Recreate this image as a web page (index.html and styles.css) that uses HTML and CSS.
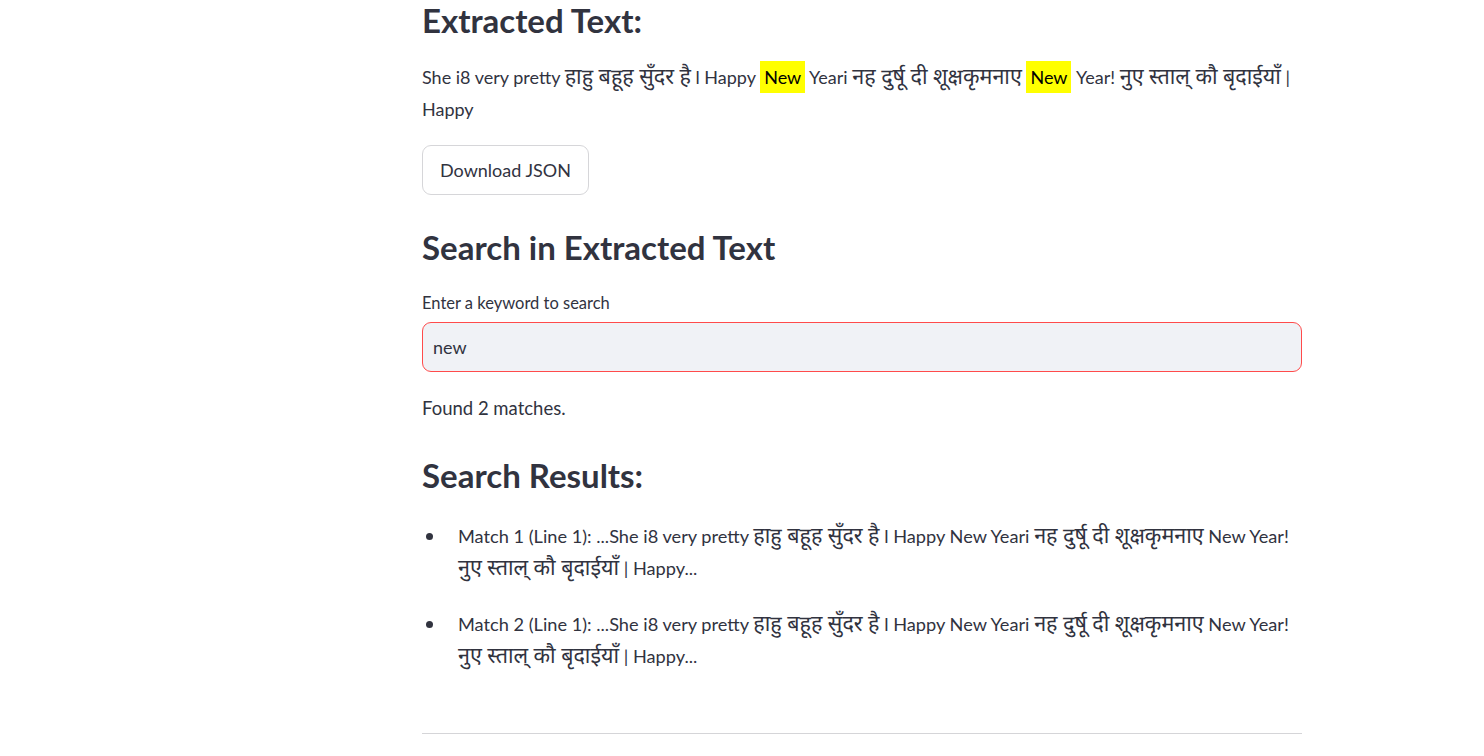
FILE: index.html
```html
<!DOCTYPE html>
<html lang="en">
<head>
<meta charset="utf-8">
<title>Extracted Text</title>
<link rel="stylesheet" href="styles.css">
</head>
<body>
<main class="main">
  <h3 class="heading heading-first">Extracted Text:</h3>
  <p class="extracted">She i8 very pretty <span class="dev">हाहु बहूह सुँदर है</span> l Happy <mark class="hl">New</mark> Yeari <span class="dev">नह दुर्षू दी शूक्षकृमनाए</span> <mark class="hl">New</mark> Year! <span class="dev">नुए स्ताल् कौ बृदाईयाँ</span> | <span class="word">Happy</span></p>
  <button class="btn" type="button">Download JSON</button>

  <h3 class="heading heading-search">Search in Extracted Text</h3>
  <label class="label" for="kw">Enter a keyword to search</label>
  <input class="input" id="kw" type="text" value="new">
  <p class="found">Found 2 matches.</p>

  <h3 class="heading heading-results">Search Results:</h3>
  <ul class="results">
    <li class="result">Match 1 (Line 1): ...She i8 very pretty <span class="dev">हाहु बहूह सुँदर है</span> l Happy New Yeari <span class="dev">नह दुर्षू दी शूक्षकृमनाए</span> New Year! <span class="dev">नुए स्ताल् कौ बृदाईयाँ</span> | Happy...</li>
    <li class="result">Match 2 (Line 1): ...She i8 very pretty <span class="dev">हाहु बहूह सुँदर है</span> l Happy New Yeari <span class="dev">नह दुर्षू दी शूक्षकृमनाए</span> New Year! <span class="dev">नुए स्ताल् कौ बृदाईयाँ</span> | Happy...</li>
  </ul>
  <hr class="rule">
</main>
</body>
</html>
```
FILE: styles.css
```css
html, body {
  margin: 0;
  padding: 0;
  background: #ffffff;
}

body {
  font-family: "Lato", "Noto Sans Devanagari", "Lohit Devanagari", "FreeSans", sans-serif;
  color: #31333f;
  font-size: 18px;
}

.main {
  width: 880px;
  margin-left: 422px;
  display: flex;
  flex-direction: column;
  align-items: flex-start;
}

.heading {
  margin: 0;
  font-size: 33px;
  font-weight: 700;
  line-height: 40px;
  color: #31333f;
}

.heading-search { margin-top: 32px; }
.heading-results { margin-top: 31px; }

.dev {
  font-size: 21.5px;
  line-height: 24px;
  vertical-align: baseline;
}

.extracted {
  margin: 21px 0 0;
  line-height: 32px;
  font-size: 18px;
}

.hl {
  background: #ffff00;
  color: #000000;
  padding: 0 4px;
  line-height: 32px;
  display: inline-block;
}

.btn {
  margin-top: 20px;
  height: 50px;
  padding: 0 17px;
  border: 1px solid #d6d6d9;
  border-radius: 9px;
  background: #ffffff;
  color: #31333f;
  font-family: inherit;
  font-size: 18px;
}

.label {
  margin-top: 26px;
  font-size: 16.5px;
  line-height: 20px;
}

.input {
  margin-top: 9px;
  width: 880px;
  height: 50px;
  box-sizing: border-box;
  padding: 0 10px;
  border: 1px solid #ff4b4b;
  border-radius: 9px;
  background: #f0f2f6;
  color: #31333f;
  font-family: inherit;
  font-size: 18px;
  outline: none;
}

.found {
  margin: 20px 0 0;
  line-height: 32px;
  font-size: 18.5px;
}

.results {
  margin: 25px 0 0;
  padding: 0 0 0 36px;
  list-style: none;
}

.result {
  position: relative;
  line-height: 32px;
  font-size: 18.2px;
}

.result::before {
  content: "";
  position: absolute;
  left: -32px;
  top: 13px;
  width: 7px;
  height: 7px;
  border-radius: 50%;
  background: #31333f;
}

.result + .result { margin-top: 24px; }

.rule {
  margin: 61px 0 0;
  width: 880px;
  border: 0;
  border-top: 1px solid #d5d5d8;
}
```
